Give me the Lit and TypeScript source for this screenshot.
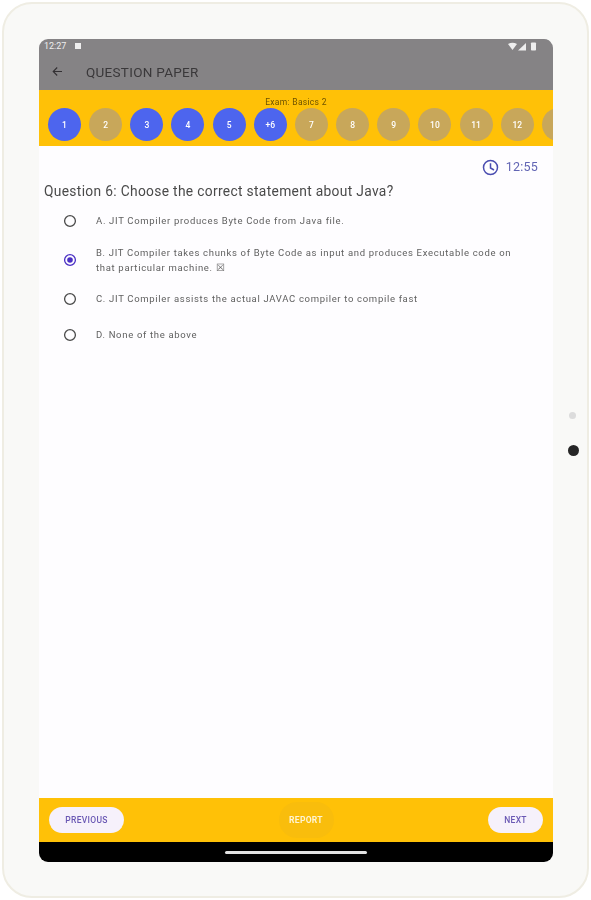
import { LitElement, html, svg, css } from "lit";
import { customElement } from "lit/decorators.js";

const QUESTIONS = ["1","2","3","4","5","+6","7","8","9","10","11","12",""];
const ANSWERED = new Set(["1","3","4","5","+6"]);
const OPTIONS = [
  { text: "A. JIT Compiler produces Byte Code from Java file.", on: false, cls: "a" },
  { text: "B. JIT Compiler takes chunks of Byte Code as input and produces Executable code on that particular machine. ☒", on: true, cls: "b" },
  { text: "C. JIT Compiler assists the actual JAVAC compiler to compile fast", on: false, cls: "c" },
  { text: "D. None of the above", on: false, cls: "d" },
];

@customElement("app-root")
export class AppRoot extends LitElement {
  static styles = css`
    :host { display: block; width: 591px; height: 900px; background: #fff; font-family: Roboto, "Noto Sans", sans-serif; overflow: hidden; }
    * { box-sizing: border-box; }
    .page { padding: 2px; height: 900px; }
    .device { position: relative; height: 896px; border-radius: 30px; background: #f9f9f7; border: 2px solid #efede3; padding: 35px 35px 33px 35px; }
    .screen { height: 823px; width: 514px; border-radius: 9px; overflow: hidden; display: flex; flex-direction: column; background: #fefdff; filter: blur(0.55px); }
    .topbar { height: 51px; flex: none; background: #858385; display: flex; flex-direction: column; }
    .status { height: 14px; flex: none; display: flex; align-items: center; padding: 0 16px 0 5px; color: #eeeeee; font-size: 9px; }
    .status .time { width: 31px; }
    .note { width: 6px; height: 6px; background: #eee; }
    .status .spacer { flex: 1; }
    .status svg { display: block; }
    .appbar { flex: 1; display: flex; align-items: center; padding: 0 0 0 13px; color: #3a383a; }
    .appbar svg { display: block; margin-right: 23px; }
    .appbar .title { font-size: 13.5px; letter-spacing: 0.28px; }
    .exam { height: 56px; flex: none; background: #ffc107; overflow: hidden; display: flex; flex-direction: column; padding-top: 7px; }
    .exam-label { text-align: center; font-size: 8.5px; line-height: 11px; color: #6d5200; letter-spacing: 0.3px; height: 11px; }
    .circles { display: flex; gap: 8.17px; padding-left: 9px; }
    .circle { flex: none; width: 33px; height: 33px; border-radius: 50%; display: flex; align-items: center; justify-content: center; font-size: 8.5px; font-weight: 500; color: #fff; background: #c8a75a; }
    .circle.done { background: #4d65ee; }
    .content { flex: 1; display: flex; flex-direction: column; background: #fefdff; min-height: 0; }
    .timer { display: flex; justify-content: flex-end; align-items: center; gap: 7px; padding: 12px 15px 0 0; color: #6265b4; font-size: 12.5px; line-height: 18px; letter-spacing: 0.2px; }
    .timer svg { display: block; }
    .question { padding: 6px 0 0 5px; font-size: 13.8px; line-height: 18px; color: #4a4a4a; letter-spacing: 0.32px; }
    .options { display: flex; flex-direction: column; padding: 7px 40px 0 22px; }
    .option { display: flex; align-items: center; gap: 17px; }
    .option.a { height: 27px; }
    .option.b { height: 51px; }
    .option.c { height: 27px; }
    .option.d { height: 45px; }
    .radio { flex: none; width: 18px; height: 18px; display: block; }
    .option-text { font-size: 9.5px; line-height: 15px; color: #606060; letter-spacing: 0.68px; }
    .bottom { height: 44px; flex: none; background: #ffc107; display: flex; align-items: center; justify-content: space-between; padding: 0 10px; }
    .btn { height: 26px; border-radius: 13px; background: #f6f1fb; color: #6a58b4; font-size: 8.5px; font-weight: 500; letter-spacing: 0.3px; display: flex; align-items: center; justify-content: center; }
    .btn.prev { width: 75px; }
    .btn.next { width: 55px; }
    .btn.report { width: 55px; height: 36px; border-radius: 18px; background: #f9bd0c; color: #fff4d2; font-weight: 700; }
    .nav { height: 20px; flex: none; background: #000; display: flex; align-items: flex-start; justify-content: center; padding-top: 9px; }
    .pill { width: 142px; height: 2.5px; border-radius: 2px; background: #e2e2e2; }
    .dot { position: absolute; border-radius: 50%; }
    .dot.light { left: 565px; top: 408px; width: 7px; height: 7px; background: #dcdcdc; }
    .dot.dark { left: 564px; top: 441px; width: 11px; height: 11px; background: #262626; }
  `;

  private radio(on: boolean) {
    const c = on ? "#4a2fc4" : "#4a4a4a";
    return html`<svg class="radio" viewBox="0 0 18 18">
      <circle cx="9" cy="9" r="5.4" fill="none" stroke=${c} stroke-width="1.3"></circle>
      ${on ? svg`<circle cx="9" cy="9" r="2.8" fill=${c}></circle>` : ""}
    </svg>`;
  }

  render() {
    return html`
      <div class="page">
        <div class="device">
          <div class="screen">
            <div class="topbar">
              <div class="status">
                <span class="time">12:27</span>
                <span class="note"></span>
                <span class="spacer"></span>
                <svg width="29" height="9" viewBox="0 0 29 9">
                  <path d="M0 2 Q4.5 -0.5 9 2 L4.5 8Z" fill="#eee"></path>
                  <path d="M10 8.5 L18 1 V8.5Z" fill="#eee"></path>
                  <rect x="23" y="0.5" width="5" height="8" rx="0.8" fill="#eee"></rect>
                </svg>
              </div>
              <div class="appbar">
                <svg width="11" height="11" viewBox="0 0 11 11" fill="none" stroke="#333033" stroke-width="1.1">
                  <path d="M10 5.5H1.5M5.2 1.5L1.2 5.5L5.2 9.5"></path>
                </svg>
                <span class="title">QUESTION PAPER</span>
              </div>
            </div>
            <div class="exam">
              <div class="exam-label">Exam: Basics 2</div>
              <div class="circles">
                ${QUESTIONS.map((q) => html`<div class="circle ${ANSWERED.has(q) ? "done" : ""}">${q}</div>`)}
              </div>
            </div>
            <div class="content">
              <div class="timer">
                <svg width="17" height="17" viewBox="0 0 17 17" fill="none" stroke="#4a4db0" stroke-width="1.5">
                  <circle cx="8.5" cy="8.5" r="7"></circle>
                  <path d="M8.5 4.2V9L12 11"></path>
                </svg>
                <span>12:55</span>
              </div>
              <div class="question">Question 6: Choose the correct statement about Java?</div>
              <div class="options">
                ${OPTIONS.map((o) => html`
                  <div class="option ${o.cls}">
                    ${this.radio(o.on)}
                    <div class="option-text">${o.text}</div>
                  </div>`)}
              </div>
            </div>
            <div class="bottom">
              <div class="btn prev">PREVIOUS</div>
              <div class="btn report">REPORT</div>
              <div class="btn next">NEXT</div>
            </div>
            <div class="nav"><div class="pill"></div></div>
          </div>
          <span class="dot light"></span>
          <span class="dot dark"></span>
        </div>
      </div>
    `;
  }
}
